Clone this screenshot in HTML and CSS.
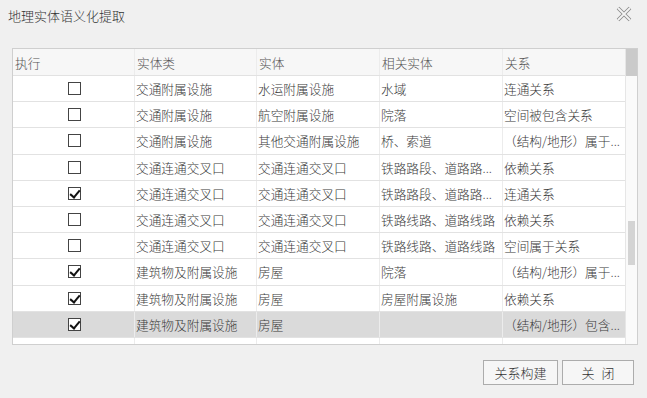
FILE: index.html
```html
<!DOCTYPE html>
<html lang="zh-CN">
<head>
  <meta charset="UTF-8" />
  <title>地理实体语义化提取</title>
  <link rel="stylesheet" href="styles.css">
</head>
<body>
<div class="dialog">
  <header class="titlebar">
    <span class="title">地理实体语义化提取</span>
    <svg class="close" width="16" height="16" viewBox="0 0 16 16">
      <path d="M2 2 L14 14 M14 2 L2 14" stroke="#8a8a8a" stroke-width="3.6" fill="none" />
      <path d="M2 2 L14 14 M14 2 L2 14" stroke="#f4f4f4" stroke-width="1.8" fill="none" />
    </svg>
  </header>

  <div class="grid">
    <div class="rows">
      <div class="row head">
        <div class="cell">执行</div>
        <div class="cell">实体类</div>
        <div class="cell">实体</div>
        <div class="cell">相关实体</div>
        <div class="cell">关系</div>
      </div>
      <div class="row">
        <div class="cell chk"><span class="box"></span></div>
        <div class="cell">交通附属设施</div>
        <div class="cell">水运附属设施</div>
        <div class="cell">水域</div>
        <div class="cell">连通关系</div>
      </div>
      <div class="row">
        <div class="cell chk"><span class="box"></span></div>
        <div class="cell">交通附属设施</div>
        <div class="cell">航空附属设施</div>
        <div class="cell">院落</div>
        <div class="cell">空间被包含关系</div>
      </div>
      <div class="row">
        <div class="cell chk"><span class="box"></span></div>
        <div class="cell">交通附属设施</div>
        <div class="cell">其他交通附属设施</div>
        <div class="cell">桥、索道</div>
        <div class="cell">（结构/地形）属于...</div>
      </div>
      <div class="row">
        <div class="cell chk"><span class="box"></span></div>
        <div class="cell">交通连通交叉口</div>
        <div class="cell">交通连通交叉口</div>
        <div class="cell">铁路路段、道路路...</div>
        <div class="cell">依赖关系</div>
      </div>
      <div class="row">
        <div class="cell chk"><span class="box checked"></span></div>
        <div class="cell">交通连通交叉口</div>
        <div class="cell">交通连通交叉口</div>
        <div class="cell">铁路路段、道路路...</div>
        <div class="cell">连通关系</div>
      </div>
      <div class="row">
        <div class="cell chk"><span class="box"></span></div>
        <div class="cell">交通连通交叉口</div>
        <div class="cell">交通连通交叉口</div>
        <div class="cell">铁路线路、道路线路</div>
        <div class="cell">依赖关系</div>
      </div>
      <div class="row">
        <div class="cell chk"><span class="box"></span></div>
        <div class="cell">交通连通交叉口</div>
        <div class="cell">交通连通交叉口</div>
        <div class="cell">铁路线路、道路线路</div>
        <div class="cell">空间属于关系</div>
      </div>
      <div class="row">
        <div class="cell chk"><span class="box checked"></span></div>
        <div class="cell">建筑物及附属设施</div>
        <div class="cell">房屋</div>
        <div class="cell">院落</div>
        <div class="cell">（结构/地形）属于...</div>
      </div>
      <div class="row">
        <div class="cell chk"><span class="box checked"></span></div>
        <div class="cell">建筑物及附属设施</div>
        <div class="cell">房屋</div>
        <div class="cell">房屋附属设施</div>
        <div class="cell">依赖关系</div>
      </div>
      <div class="row selected">
        <div class="cell chk"><span class="box checked"></span></div>
        <div class="cell">建筑物及附属设施</div>
        <div class="cell">房屋</div>
        <div class="cell"></div>
        <div class="cell">（结构/地形）包含...</div>
      </div>
      <div class="row">
        <div class="cell chk"><span class="box faint"></span></div>
        <div class="cell"></div>
        <div class="cell"></div>
        <div class="cell"></div>
        <div class="cell"></div>
      </div>
    </div>
    <div class="scrollbar">
      <div class="corner"></div>
      <div class="track"><div class="thumb"></div></div>
    </div>
  </div>

  <footer class="actions">
    <button class="btn wide">关系构建</button>
    <button class="btn">关 闭</button>
  </footer>
</div>
</body>
</html>
```

FILE: styles.css
```css
body {
  margin: 0;
  background-color: #f0f0f0;
  font-family: "Noto Sans CJK SC", "Microsoft YaHei", sans-serif;
  font-size: 12.7px;
  font-weight: 300;
  color: #3a3a3a;
}

.dialog {
  width: 647px;
  height: 398px;
}

.titlebar {
  height: 30px;
  display: flex;
  align-items: center;
  justify-content: space-between;
  padding: 0 15px 0 8px;
}
.title {
  font-size: 13px;
  color: #333;
}
.close {
  margin-top: -2px;
}

.grid {
  margin: 18px 9px 0 12px;
  height: 297px;
  box-sizing: border-box;
  border: 1px solid #cfcfcf;
  background-color: #fff;
  display: flex;
  overflow: hidden;
}

.rows {
  width: 613px;
  overflow: hidden;
}

.row {
  display: grid;
  grid-template-columns: 122px 122px 123px 123px 123px;
  height: 26.2px;
  box-sizing: border-box;
  border-bottom: 1px solid #e2e2e2;
}
.row.head {
  height: 27px;
  background-color: #f7f7f7;
  color: #555;
}
.row.head .cell {
  padding-left: 2px;
}
.row.selected {
  background-color: #dadada;
}

.cell {
  display: flex;
  align-items: center;
  padding-left: 1px;
  border-right: 1px solid #ececec;
  white-space: nowrap;
  overflow: hidden;
}
.cell:last-child {
  border-right: none;
}
.cell.chk {
  justify-content: center;
  padding-left: 2px;
}

.box {
  width: 13px;
  height: 13px;
  box-sizing: border-box;
  border: 1px solid #444;
  background-color: #fff;
  position: relative;
}
.box.checked::after {
  content: "";
  position: absolute;
  left: 3px;
  top: 0px;
  width: 4px;
  height: 8px;
  border: solid #111;
  border-width: 0 2px 2px 0;
  transform: rotate(40deg);
}
.box.faint {
  border-color: #999;
}

.scrollbar {
  width: 11px;
  display: flex;
  flex-direction: column;
  border-left: 1px solid #e6e6e6;
  background-color: #fafafa;
}
.corner {
  height: 27px;
  background-color: #cacaca;
}
.track {
  flex: 1;
  padding: 145px 2px 0 2px;
}
.thumb {
  height: 44px;
  background-color: #d4d4d4;
}

.actions {
  display: flex;
  justify-content: flex-end;
  gap: 4px;
  padding: 15px 13px 0 0;
}
.btn {
  height: 25px;
  width: 72px;
  border: 1px solid #acacac;
  background-color: #f6f6f6;
  font-family: inherit;
  font-size: 13px;
  font-weight: 300;
  color: #333;
  padding: 0;
  word-spacing: 4px;
}
.btn.wide {
  width: 75px;
}
```
